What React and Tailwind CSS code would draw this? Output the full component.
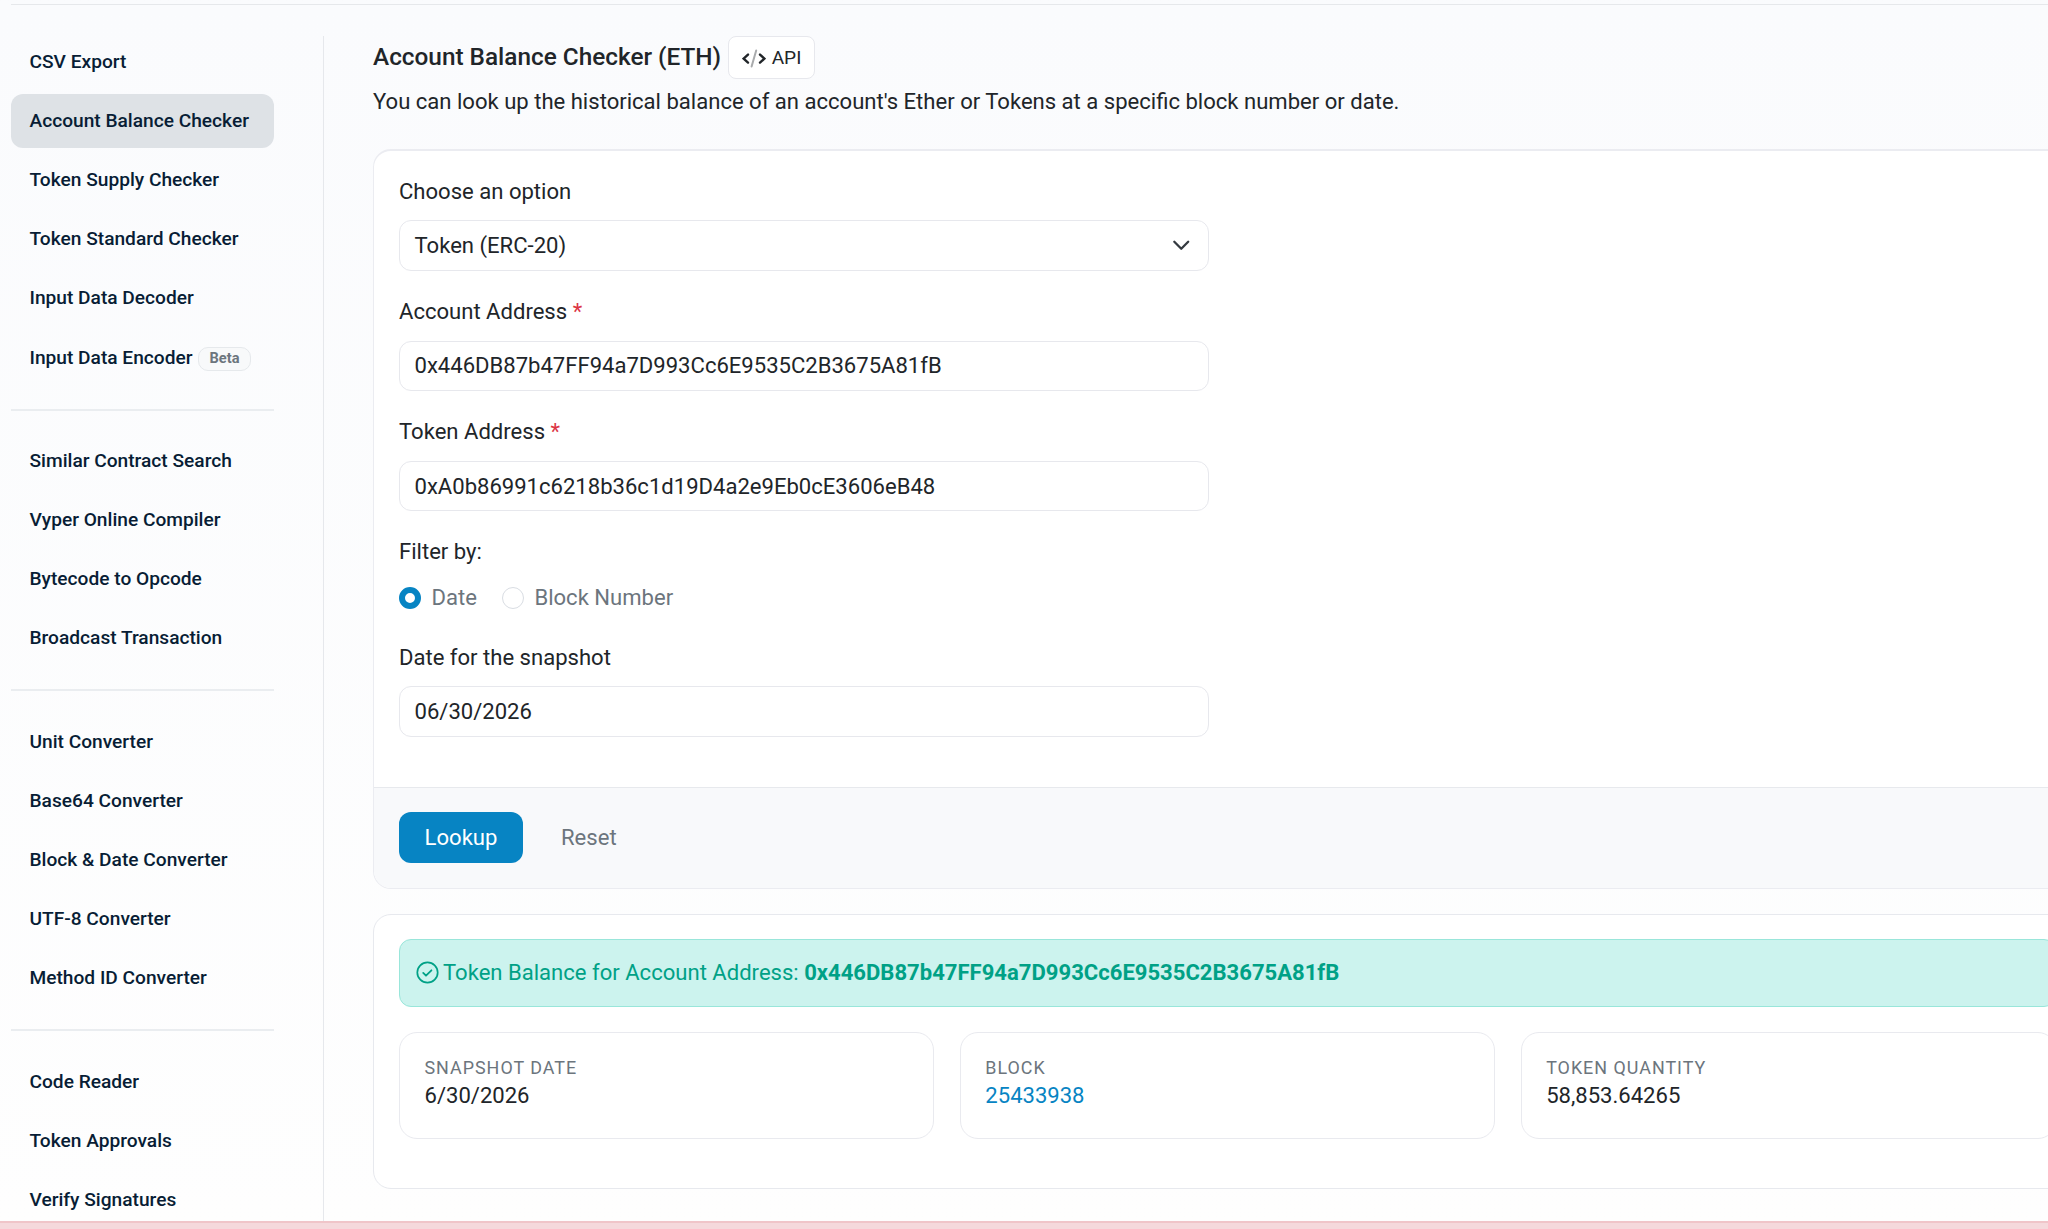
import { useState } from "react";
import clsx from "clsx";

const ADDRESS = "0x446DB87b47FF94a7D993Cc6E9535C2B3675A81fB";

const toolGroups = [
  [
    { label: "CSV Export" },
    { label: "Account Balance Checker" },
    { label: "Token Supply Checker" },
    { label: "Token Standard Checker" },
    { label: "Input Data Decoder" },
    { label: "Input Data Encoder", badge: "Beta" },
  ],
  [
    { label: "Similar Contract Search" },
    { label: "Vyper Online Compiler" },
    { label: "Bytecode to Opcode" },
    { label: "Broadcast Transaction" },
  ],
  [
    { label: "Unit Converter" },
    { label: "Base64 Converter" },
    { label: "Block & Date Converter" },
    { label: "UTF-8 Converter" },
    { label: "Method ID Converter" },
  ],
  [{ label: "Code Reader" }, { label: "Token Approvals" }, { label: "Verify Signatures" }],
];

const results = [
  { label: "Snapshot Date", value: "6/30/2026" },
  { label: "Block", value: "25433938", link: true },
  { label: "Token Quantity", value: "58,853.64265" },
];

function Sidebar() {
  const [active, setActive] = useState("Account Balance Checker");

  return (
    <nav className="w-[263px] shrink-0" aria-label="Tools">
      {toolGroups.map((group, i) => (
        <div key={i}>
          {i > 0 && <hr className="my-[23.65px] h-0.5 border-0 bg-[#eaedf0]" />}
          <ul className="flex flex-col gap-[5.2px]">
            {group.map((item) => (
              <li key={item.label}>
                <a
                  href="#"
                  onClick={() => setActive(item.label)}
                  className={clsx(
                    "flex h-[54px] items-center gap-[5px] rounded-xl pl-[18.5px] text-[19.15px] font-medium whitespace-nowrap text-[#081d35]",
                    active === item.label && "bg-[#dee2e6]"
                  )}
                >
                  {item.label}
                  {item.badge && (
                    <span className="mt-[3px] flex h-6 items-center rounded-[10px] border border-[#e6e9ec] bg-[#f8f9fa] px-[11px] text-[14.6px] font-bold text-[#6c757d]">
                      {item.badge}
                    </span>
                  )}
                </a>
              </li>
            ))}
          </ul>
        </div>
      ))}
    </nav>
  );
}

function Field({ label, required, children }) {
  return (
    <div className="mb-[24.2px]">
      <div className="mb-[12.6px] h-[33px] leading-[33px]">
        {label} {required && <span className="text-[#dc3545]">*</span>}
      </div>
      <div className="flex h-[50.5px] w-[810px] items-center justify-between rounded-xl border border-[#e7e8ed] bg-white pr-[18px] pl-[14.5px]">
        {children}
      </div>
    </div>
  );
}

function Radio({ label, checked, onSelect }) {
  return (
    <button type="button" role="radio" aria-checked={checked} onClick={onSelect} className="flex items-center gap-[10.5px]">
      <span
        className={clsx(
          "h-[22px] w-[22px] rounded-full bg-white",
          checked ? "border-[6px] border-[#0784c3]" : "border border-[#d9dde3]"
        )}
      />
      {label}
    </button>
  );
}

export default function App() {
  const [filter, setFilter] = useState("date");

  return (
    <div className="flex h-[1229px] w-full flex-col overflow-hidden bg-linear-to-b from-[#fafbfd] to-[#fefefe] font-[Roboto,sans-serif] text-[22.07px] text-[#212529]">
      <div className="mt-1 ml-[11px] h-px shrink-0 bg-[#e6e8eb]" />

      <div className="mt-[30px] flex h-[1186px] shrink-0 overflow-hidden pl-[11px]">
        <Sidebar />
        <div className="mt-px ml-[49px] w-px shrink-0 bg-[#e6e8ec]" />

        <main className="mt-px ml-[49px] w-[1709px] shrink-0">
          <div className="flex h-[43px] items-center gap-[7px]">
            <h1 className="text-[24.35px] font-medium">Account Balance Checker (ETH)</h1>
            <button
              type="button"
              className="flex h-[43px] w-[87px] items-center gap-1.5 rounded-lg border border-[#e7e8ed] bg-white pt-px pl-[12.5px] text-[19.1px]"
            >
              <svg className="h-[19px] w-6" viewBox="0 0 24 19" fill="none" strokeLinecap="round" strokeWidth="2.4">
                <path d="M6 5.6L1.6 9.6L6 13.6M18 5.6L22.4 9.6L18 13.6" stroke="#212529" />
                <path d="M14.2 1.4L9.6 17.6" stroke="#a9abad" strokeWidth="2" />
              </svg>
              API
            </button>
          </div>
          <p className="mt-[6px] h-[33px] leading-[33px]">
            You can look up the historical balance of an account's Ether or Tokens at a specific block number or date.
          </p>

          <section className="mt-[31px] flex h-[740px] flex-col overflow-hidden rounded-[18px] border border-t-2 border-[#ebecf1] bg-white">
            <div className="h-[635.5px] shrink-0 px-[25px] pt-[23.7px]">
              <Field label="Choose an option">
                Token (ERC-20)
                <svg className="h-[18.5px] w-[18.5px]" viewBox="0 0 16 16" fill="none">
                  <path d="M2 5l6 6 6-6" stroke="#343a40" strokeWidth="2" strokeLinecap="round" strokeLinejoin="round" />
                </svg>
              </Field>
              <Field label="Account Address" required>
                {ADDRESS}
              </Field>
              <Field label="Token Address" required>
                0xA0b86991c6218b36c1d19D4a2e9Eb0cE3606eB48
              </Field>

              <div className="-mt-[0.5px] h-[33px] leading-[33px]">Filter by:</div>
              <div className="mt-[18.9px] mb-[31.9px] flex h-[22px] items-center gap-[25px] text-[#6c757d]" role="radiogroup">
                <Radio label="Date" checked={filter === "date"} onSelect={() => setFilter("date")} />
                <Radio label="Block Number" checked={filter === "block"} onSelect={() => setFilter("block")} />
              </div>

              <Field label="Date for the snapshot">06/30/2026</Field>
            </div>

            <div className="flex flex-1 items-center border-t border-[#e7e9ed] bg-[#f8f9fb] px-[25px]">
              <button type="button" className="h-[51px] w-[124px] rounded-xl bg-[#0784c3] text-white">
                Lookup
              </button>
              <button type="button" className="ml-[38px] text-[#6c757d]">
                Reset
              </button>
            </div>
          </section>

          <section className="mt-[25px] h-[275px] rounded-[18px] border border-[#e7e9ee] bg-white px-[25px] pt-6">
            <div className="flex h-[68px] items-center rounded-xl border border-[#99e6da] bg-[#ccf3ee] pl-[15.5px] text-[#00a186]">
              <svg className="mr-[4.5px] h-[23px] w-[23px] -translate-y-px" viewBox="0 0 23 23" fill="none" stroke="currentColor">
                <circle cx="11.5" cy="11.5" r="10.2" strokeWidth="1.7" />
                <path d="M7.2 11.9l2.8 2.8 5.4-5.4" strokeWidth="1.8" strokeLinecap="round" strokeLinejoin="round" />
              </svg>
              <span>
                Token Balance for Account Address: <b className="font-bold">{ADDRESS}</b>
              </span>
            </div>

            <div className="mt-[25px] grid grid-cols-3 gap-[25.5px]">
              {results.map((r) => (
                <div key={r.label} className="h-[106.5px] rounded-[18px] border border-[#e9eaef] pt-[21px] pl-[24.5px]">
                  <div className="h-7 text-[17.9px] leading-7 tracking-[1px] text-[#6c757d] uppercase">{r.label}</div>
                  <div className={clsx("h-7 leading-7", r.link && "text-[#0784c3]")}>{r.value}</div>
                </div>
              ))}
            </div>
          </section>
        </main>
      </div>

      <div className="h-2 shrink-0 border-t-2 border-[#f0c5c9] bg-[#f5d9dc]" />
    </div>
  );
}
